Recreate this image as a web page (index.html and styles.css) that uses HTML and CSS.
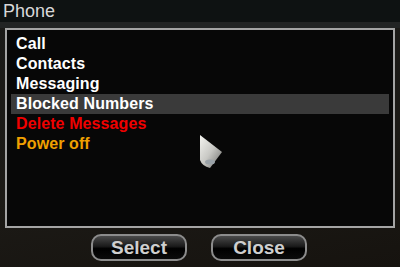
FILE: index.html
```html
<!DOCTYPE html>
<html lang="en">
<head>
    <meta charset="UTF-8">
    <title>Phone</title>
    <link rel="stylesheet" href="styles.css">
</head>
<body>
    <div class="screen">
        <div class="titlebar">Phone</div>
        <div class="strip"></div>
        <div class="panel">
            <ul class="menu">
                <li>Call</li>
                <li>Contacts</li>
                <li>Messaging</li>
                <li class="selected">Blocked Numbers</li>
                <li class="danger">Delete Messages</li>
                <li class="warn">Power off</li>
            </ul>
        </div>
        <div class="buttons">
            <button class="btn">Select</button>
            <button class="btn">Close</button>
        </div>
        <svg class="cursor" width="26" height="36" viewBox="0 0 26 36">
            <defs>
                <linearGradient id="cg" x1="0" y1="0" x2="1" y2="1">
                    <stop offset="0" stop-color="#f4f4f0"/>
                    <stop offset="0.5" stop-color="#c8c8c4"/>
                    <stop offset="1" stop-color="#6a6a68"/>
                </linearGradient>
            </defs>
            <path d="M2 1 L24 18 L12 34 Q4 32 2 26 Z" fill="url(#cg)"/>
            <ellipse cx="12" cy="28" rx="5" ry="2.5" fill="#9aa2a8"/>
        </svg>
    </div>
</body>
</html>
```

FILE: styles.css
```css
body {
    margin: 0;
    background-color: #000;
    font-family: "Liberation Sans", Arial, sans-serif;
}
.screen {
    position: relative;
    width: 400px;
    height: 267px;
    overflow: hidden;
    background: linear-gradient(170deg, #1a1a18 0%, #1c1a16 60%, #16130f 100%);
}
.titlebar {
    height: 22px;
    line-height: 22px;
    padding-left: 3px;
    background-color: #0e1212;
    color: #d8d8d8;
    font-size: 18px;
}
.strip {
    height: 6px;
    background-color: #222424;
}
.panel {
    margin: 0 5px;
    height: 196px;
    border: 2px solid #a4a4a4;
    background-color: #070707;
}
.menu {
    list-style: none;
    margin: 4px 4px 0;
    padding: 0;
}
.menu li {
    height: 20px;
    line-height: 20px;
    padding-left: 5px;
    color: #fff;
    font-size: 16px;
    font-weight: bold;
    letter-spacing: 0.1px;
}
.menu li.selected {
    background-color: #3a3a3a;
}
.menu li.danger {
    color: #f00000;
}
.menu li.warn {
    color: #f0a000;
}
.buttons {
    display: flex;
    justify-content: center;
    gap: 24px;
    padding-top: 6px;
    padding-right: 2px;
}
.btn {
    width: 96px;
    height: 27px;
    padding: 0;
    border: 2px solid #8c8c8c;
    border-radius: 10px;
    background: linear-gradient(#4a4a4a 0%, #1a1a1a 45%, #000 55%, #0a0a0a 100%);
    color: #cfcfcf;
    font-family: "Liberation Sans", Arial, sans-serif;
    font-size: 19px;
    font-weight: bold;
    line-height: 23px;
}
.cursor {
    position: absolute;
    left: 198px;
    top: 134px;
}
```
